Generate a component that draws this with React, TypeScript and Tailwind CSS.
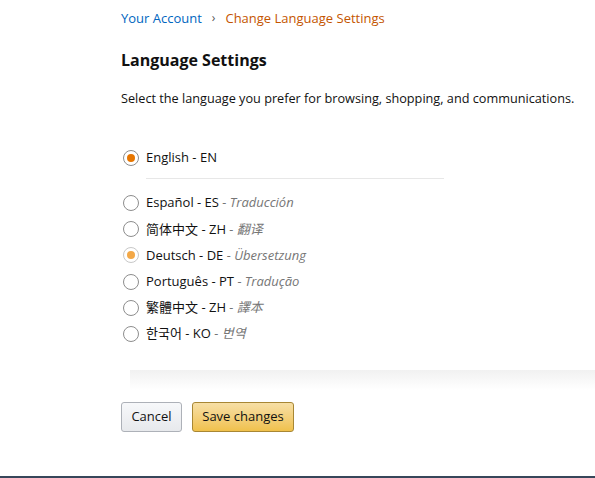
import React, { useState } from 'react';

const languages = [
  { code: 'en', label: 'English - EN', note: '' },
  { code: 'es', label: 'Español - ES', note: 'Traducción' },
  { code: 'zh-cn', label: '简体中文 - ZH', note: '翻译' },
  { code: 'de', label: 'Deutsch - DE', note: 'Übersetzung' },
  { code: 'pt', label: 'Português - PT', note: 'Tradução' },
  { code: 'zh-tw', label: '繁體中文 - ZH', note: '譯本' },
  { code: 'ko', label: '한국어 - KO', note: '번역' },
];

const Radio: React.FC<{ checked: boolean; soft?: boolean }> = ({ checked, soft }) => (
  <span
    className={
      'ml-[2px] flex h-[16px] w-[16px] shrink-0 items-center justify-center rounded-full border bg-white ' +
      (soft ? 'border-[#c8c8c8]' : 'border-[#8d8d8d]')
    }
  >
    {checked && (
      <span className={'h-[8px] w-[8px] rounded-full ' + (soft ? 'bg-[#f3a847]' : 'bg-[#e77600]')} />
    )}
  </span>
);

export default function App() {
  const [selected, setSelected] = useState('en');

  return (
    <div
      className="relative h-[478px] w-full overflow-hidden bg-white text-[#111]"
      style={{ fontFamily: '"Open Sans", "Noto Sans CJK SC", "Noto Sans CJK KR", sans-serif' }}
    >
      <div className="pl-[121px] pt-[8px]">
        <nav className="flex items-center text-[13px] leading-[20px]">
          <a className="text-[#0066c0]">Your Account</a>
          <span className="mx-[10px] text-[12px] text-[#555]">›</span>
          <span className="text-[#c45500]">Change Language Settings</span>
        </nav>

        <h1 className="mt-[20px] text-[16px] font-bold leading-[24px]">Language Settings</h1>
        <p className="mt-[17px] text-[12.7px] leading-[18px]">
          Select the language you prefer for browsing, shopping, and communications.
        </p>

        <div className="mt-[41px] flex flex-col">
          <label className="flex h-[20px] items-center gap-[7px] text-[13px]" onClick={() => setSelected('en')}>
            <Radio checked={selected === 'en'} />
            <span>English - EN</span>
          </label>
          <div className="mb-[11px] ml-[25px] mt-[10px] h-px w-[298px] bg-[#e7e7e7]" />
          <div className="flex flex-col">
            {languages.slice(1).map((l) => (
              <label
                key={l.code}
                className="flex h-[26.2px] items-center gap-[7px] text-[13px]"
                onClick={() => setSelected(l.code)}
              >
                <Radio checked={l.code === 'de' || selected === l.code} soft={l.code === 'de'} />
                <span>
                  {l.label}
                  <span className="italic text-[#767676]"> - {l.note}</span>
                </span>
              </label>
            ))}
          </div>
        </div>
      </div>

      <div className="ml-[130px] mt-[23px] h-[20px] bg-gradient-to-b from-[#f1f1f1] to-white" />

      <div className="mt-[12px] flex gap-[10px] pl-[121px]">
        <button className="h-[30px] w-[61px] rounded-[3px] border border-[#adb1b8] bg-gradient-to-b from-[#f7f8fa] to-[#e7e9ec] text-[13px] text-[#111]">
          Cancel
        </button>
        <button className="h-[30px] w-[102px] rounded-[3px] border border-[#a88734] bg-gradient-to-b from-[#f7dfa5] to-[#f0c14b] text-[13px] text-[#111]">
          Save changes
        </button>
      </div>

      <div className="absolute bottom-0 left-0 h-[2px] w-full bg-[#37475a]" />
    </div>
  );
}
